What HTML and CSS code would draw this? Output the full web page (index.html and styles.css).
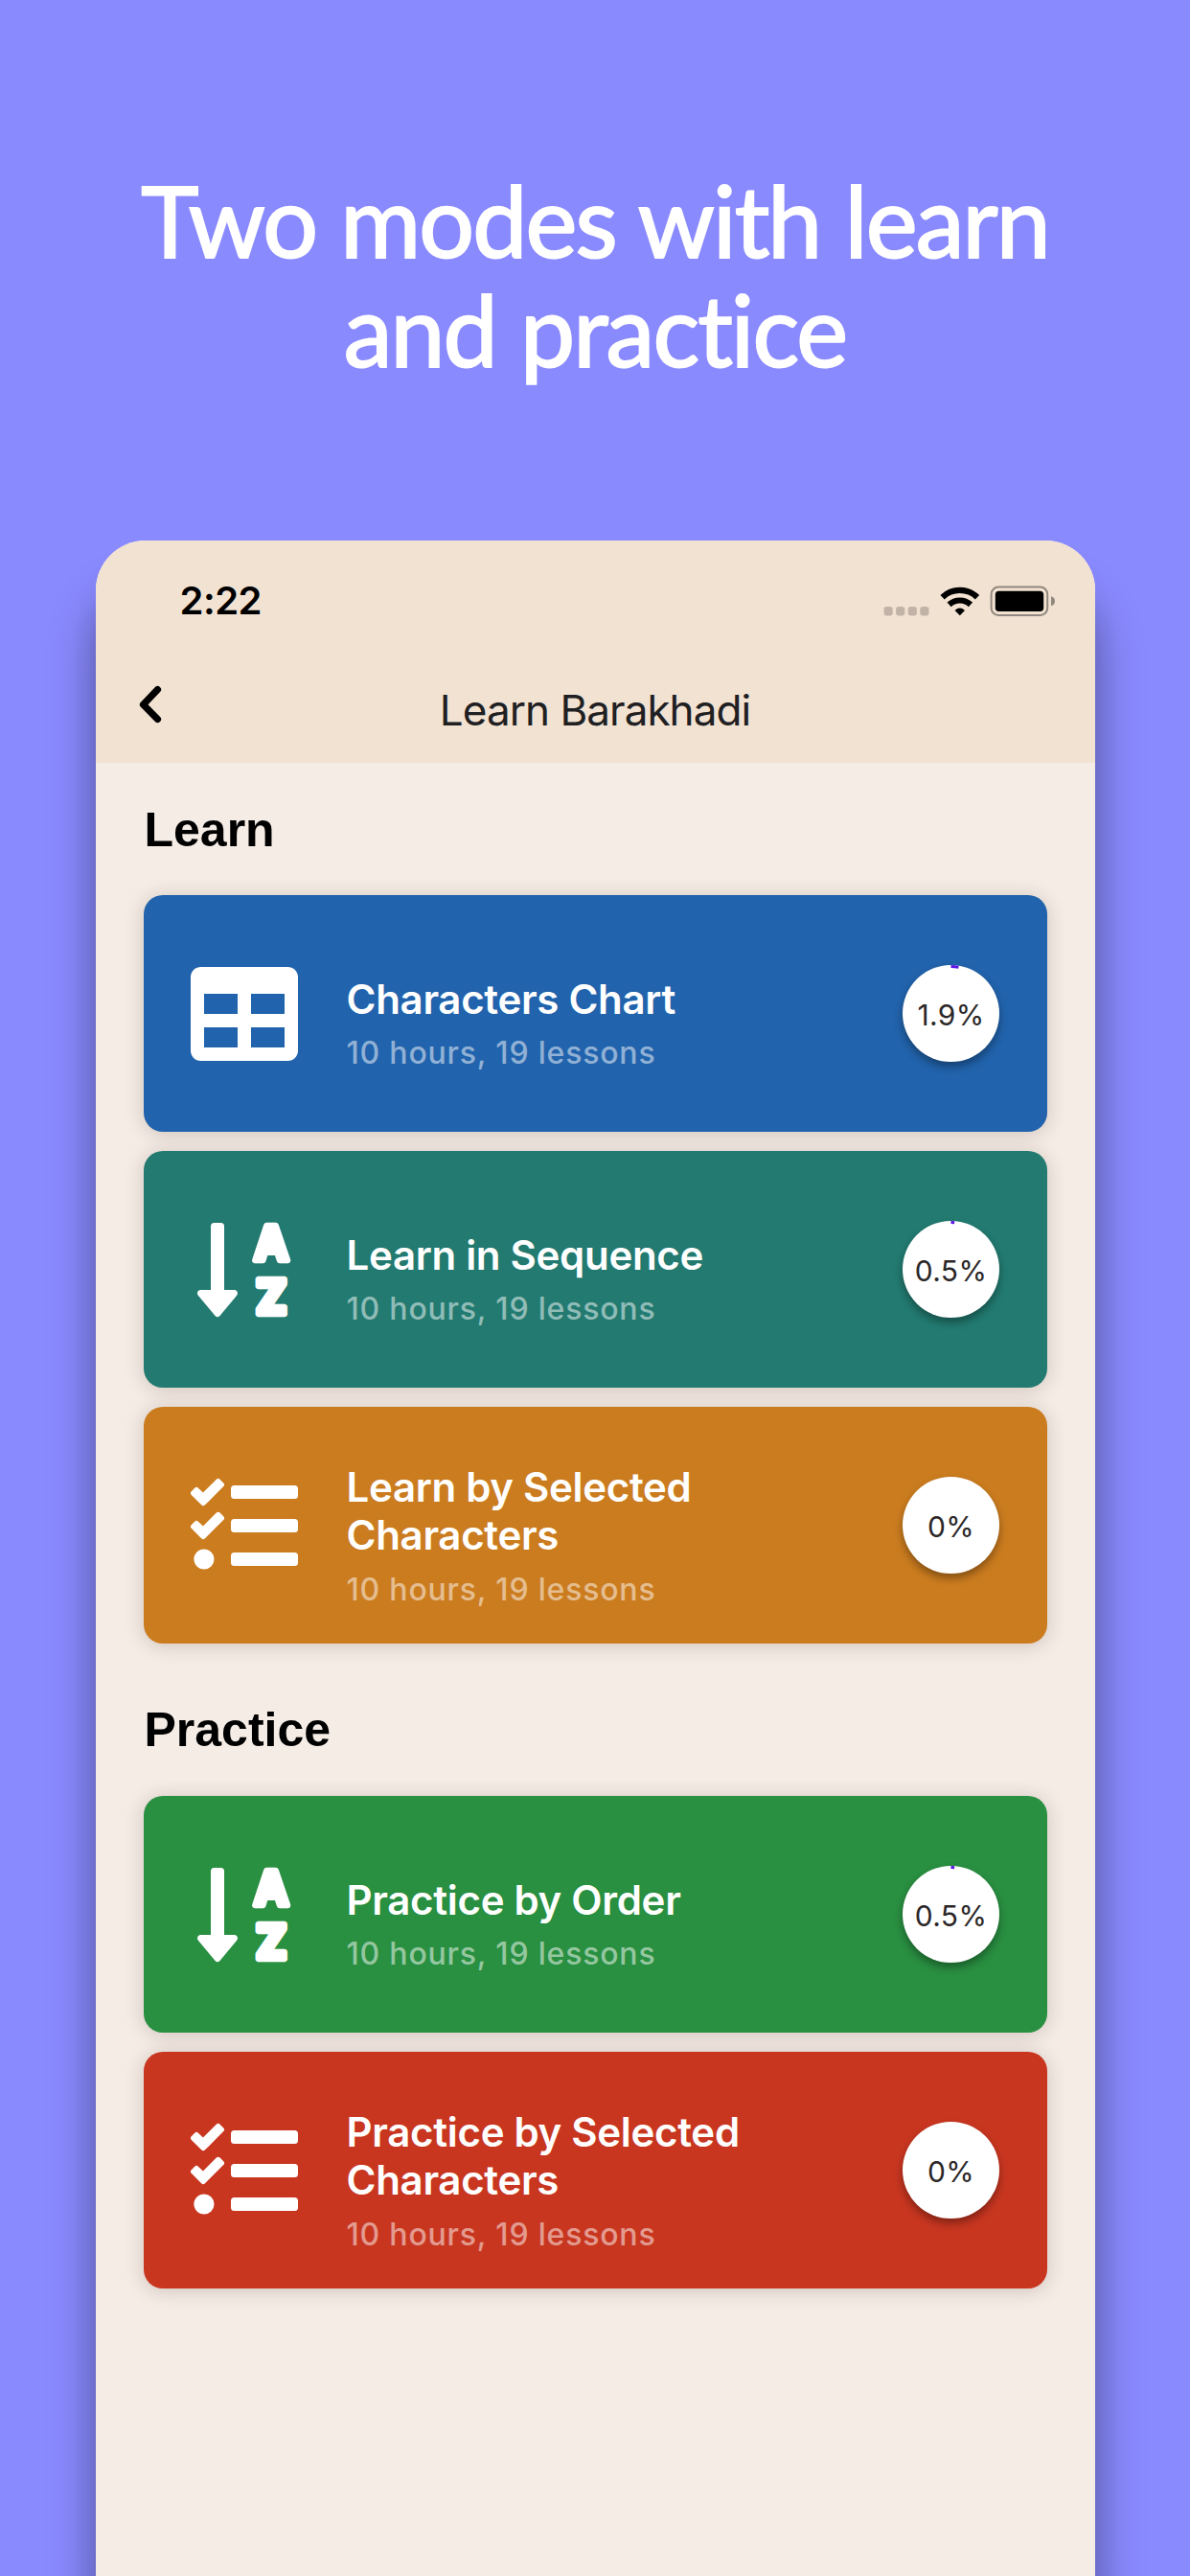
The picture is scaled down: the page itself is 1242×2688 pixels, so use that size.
FILE: index.html
```html
<!DOCTYPE html>
<html lang="en">
<head>
<meta charset="utf-8">
<title>Learn Barakhadi</title>
<link rel="stylesheet" href="styles.css">
</head>
<body>
<svg class="defs" aria-hidden="true">
  <symbol id="icon-table" viewBox="0 0 512 512"><path d="M464 32H48C21.49 32 0 53.49 0 80v352c0 26.51 21.49 48 48 48h416c26.51 0 48-21.49 48-48V80c0-26.51-21.49-48-48-48zM224 416H64v-96h160v96zm0-160H64v-96h160v96zm224 160H288v-96h160v96zm0-160H288v-96h160v96z"/></symbol>
  <symbol id="icon-sort" viewBox="-32 0 512 512"><path d="M176 352h-48V48a16 16 0 0 0-16-16H80a16 16 0 0 0-16 16v304H16c-14.19 0-21.36 17.24-11.29 27.31l80 96a16 16 0 0 0 22.62 0l80-96C197.35 369.26 190.22 352 176 352z"/><text class="sort-letter" x="271" y="209" textLength="164" lengthAdjust="spacingAndGlyphs">A</text><text class="sort-letter letter-z" x="280" y="465" textLength="146" lengthAdjust="spacingAndGlyphs">Z</text></symbol>
  <symbol id="icon-tasks" viewBox="0 0 512 512"><path d="M139.61 35.5a12 12 0 0 0-17 0L58.93 98.81l-22.7-22.12a12 12 0 0 0-17 0L3.53 92.41a12 12 0 0 0 0 17l47.59 47.4a12.78 12.78 0 0 0 17.61 0l15.59-15.62L156.52 69a12.09 12.09 0 0 0 .09-17zm0 159.19a12 12 0 0 0-17 0l-63.68 63.72-22.7-22.1a12 12 0 0 0-17 0L3.53 252a12 12 0 0 0 0 17L51 316.5a12.77 12.77 0 0 0 17.6 0l15.7-15.69 72.2-72.22a12 12 0 0 0 .09-16.9zM64 368c-26.49 0-48.59 21.5-48.59 48S37.53 464 64 464a48 48 0 0 0 0-96zm432 16H208a16 16 0 0 0-16 16v32a16 16 0 0 0 16 16h288a16 16 0 0 0 16-16v-32a16 16 0 0 0-16-16zm0-320H208a16 16 0 0 0-16 16v32a16 16 0 0 0 16 16h288a16 16 0 0 0 16-16V80a16 16 0 0 0-16-16zm0 160H208a16 16 0 0 0-16 16v32a16 16 0 0 0 16 16h288a16 16 0 0 0 16-16v-32a16 16 0 0 0-16-16z"/></symbol>
</svg>

<h1 class="headline">Two modes with learn<br>and practice</h1>

<main class="phone">
  <header class="topbar">
    <div class="status">
      <span class="time">2:22</span>
      <svg class="status-icons" viewBox="0 0 180 34" width="180" height="34">
        <g fill="#c1b4a7"><rect x="1.5" y="23" width="9.2" height="9.4" rx="2.8"/><rect x="14.1" y="23" width="9.2" height="9.4" rx="2.8"/><rect x="26.7" y="23" width="9.2" height="9.4" rx="2.8"/><rect x="39.3" y="23" width="9.2" height="9.4" rx="2.8"/></g>
        <g fill="none" stroke="#000" stroke-width="6.2"><path d="M62.6 13.2a26.5 26.5 0 0 1 36.4 0"/><path d="M69.6 20.9a16.5 16.5 0 0 1 22.4 0"/></g>
        <path d="M80.8 32.2l-5.2-5.3q5.2-4.6 10.4 0z"/>
        <rect x="113.6" y="2.5" width="58.6" height="29.5" rx="7.5" fill="none" stroke="#91887e" stroke-width="2"/>
        <rect x="117.8" y="6.7" width="50.4" height="21.4" rx="3.8"/>
        <path d="M176 12.2q4 1.2 4 5t-4 5z" fill="#91887e"/>
      </svg>
    </div>
    <div class="nav">
      <svg class="back" viewBox="0 0 24 40" width="24" height="40"><path d="M19.5 4.5L4.5 20.2L19.5 35.5" fill="none" stroke="#000" stroke-width="7.2" stroke-linecap="round" stroke-linejoin="round"/></svg>
      <span class="title">Learn Barakhadi</span>
    </div>
  </header>

  <section class="group">
    <h2 class="group-title">Learn</h2>
    <article class="card blue">
      <svg class="icon"><use href="#icon-table"/></svg>
      <div class="text"><h3 class="name">Characters Chart</h3><p class="meta">10 hours, 19 lessons</p></div>
      <div class="ring"><svg class="arc" viewBox="0 0 101 101"><circle cx="50.5" cy="50.5" r="49" pathLength="100" stroke-dasharray="2.6 97.4"/></svg>1.9%</div>
    </article>
    <article class="card teal">
      <svg class="icon"><use href="#icon-sort"/></svg>
      <div class="text"><h3 class="name">Learn in Sequence</h3><p class="meta">10 hours, 19 lessons</p></div>
      <div class="ring"><svg class="arc" viewBox="0 0 101 101"><circle cx="50.5" cy="50.5" r="49" pathLength="100" stroke-dasharray="1.2 98.8"/></svg>0.5%</div>
    </article>
    <article class="card amber">
      <svg class="icon"><use href="#icon-tasks"/></svg>
      <div class="text"><h3 class="name">Learn by Selected Characters</h3><p class="meta">10 hours, 19 lessons</p></div>
      <div class="ring">0%</div>
    </article>
  </section>

  <section class="group">
    <h2 class="group-title">Practice</h2>
    <article class="card green">
      <svg class="icon"><use href="#icon-sort"/></svg>
      <div class="text"><h3 class="name">Practice by Order</h3><p class="meta">10 hours, 19 lessons</p></div>
      <div class="ring"><svg class="arc" viewBox="0 0 101 101"><circle cx="50.5" cy="50.5" r="49" pathLength="100" stroke-dasharray="1.2 98.8"/></svg>0.5%</div>
    </article>
    <article class="card red">
      <svg class="icon"><use href="#icon-tasks"/></svg>
      <div class="text"><h3 class="name">Practice by Selected Characters</h3><p class="meta">10 hours, 19 lessons</p></div>
      <div class="ring">0%</div>
    </article>
  </section>
</main>
</body>
</html>
```
FILE: styles.css
```css
* { box-sizing: border-box; }

body {
  margin: 0;
  height: 2688px;
  overflow: hidden;
  display: flex;
  flex-direction: column;
  align-items: center;
  background: #8a8aff;
  font-family: Inter, "Liberation Sans", sans-serif;
}

h1, h2, h3, p { margin: 0; }

.defs { display: none; }

.headline {
  flex: none;
  height: 564px;
  padding-top: 173px;
  text-align: center;
  white-space: nowrap;
  font: 400 102px/114px Lato, sans-serif;
  letter-spacing: -1.9px;
  word-spacing: 1px;
  color: #fff;
  -webkit-text-stroke: 2px #fff;
}

.phone {
  flex: none;
  width: 1043px;
  height: 2124px;
  border-radius: 52px 52px 0 0;
  background: #f5ece6;
  box-shadow: 0 56px 48px rgba(0, 0, 0, 0.4), 0 20px 48px rgba(0, 0, 0, 0.02);
}

.topbar {
  height: 232px;
  border-radius: 52px 52px 0 0;
  background: #f2e2d2;
}

.status {
  height: 125px;
  padding: 0 42px 0 88px;
  display: flex;
  align-items: center;
  justify-content: space-between;
}

.time {
  font-size: 40px;
  font-weight: 600;
  letter-spacing: -0.5px;
}

.status-icons { display: block; }

.nav {
  height: 107px;
  padding: 0 45px;
  display: grid;
  grid-template-columns: 24px 1fr 24px;
  align-items: start;
}

.back { margin-top: 26px; }

.title {
  margin-top: 25px;
  text-align: center;
  font-size: 44px;
  line-height: 54px;
  letter-spacing: -0.95px;
  color: #202022;
}

.group {
  padding: 0 50px;
  display: flex;
  flex-direction: column;
  gap: 20px;
}

.group-title {
  height: 118px;
  padding: 41px 0 0 1px;
  font: 700 50px/58px "Liberation Sans", sans-serif;
  color: #000;
}

.group + .group .group-title {
  height: 139px;
  padding-top: 61px;
}

.card {
  height: 247px;
  padding: 0 50px 0 49px;
  display: flex;
  align-items: center;
  border-radius: 20px;
  box-shadow: 0 2px 20px rgba(60, 35, 20, 0.2);
  color: #fff;
}

.blue { background: #2163ac; }
.teal { background: #227a70; }
.amber { background: #cb7c1f; }
.green { background: #298f41; }
.red { background: #c83620; }

.icon {
  flex: none;
  width: 112px;
  height: 112px;
  fill: #fff;
}

.sort-letter {
  font: 700 223px Inter, sans-serif;
  stroke: #fff;
  stroke-width: 30px;
  stroke-linejoin: round;
}

.letter-z { font-weight: 800; }

.text {
  width: 440px;
  margin: 21px auto 0 51px;
}

.name {
  font-size: 42px;
  font-weight: 600;
  line-height: 50.5px;
  letter-spacing: -0.3px;
}

.meta {
  margin-top: 11px;
  font-size: 32px;
  font-weight: 500;
  line-height: 39px;
  letter-spacing: 0.8px;
  color: rgba(255, 255, 255, 0.5);
}

.ring {
  position: relative;
  flex: none;
  width: 101px;
  height: 101px;
  display: flex;
  align-items: center;
  justify-content: center;
  border-radius: 50%;
  background: #fff;
  box-shadow: 0 5px 9px rgba(0, 0, 0, 0.35);
  font-size: 30px;
  letter-spacing: 0.3px;
  padding: 3px 0 0 1px;
  color: #2b2728;
}

.arc {
  position: absolute;
  inset: 0;
  transform: rotate(-90deg);
  fill: none;
  stroke: #5a14e6;
  stroke-width: 3;
}
```
